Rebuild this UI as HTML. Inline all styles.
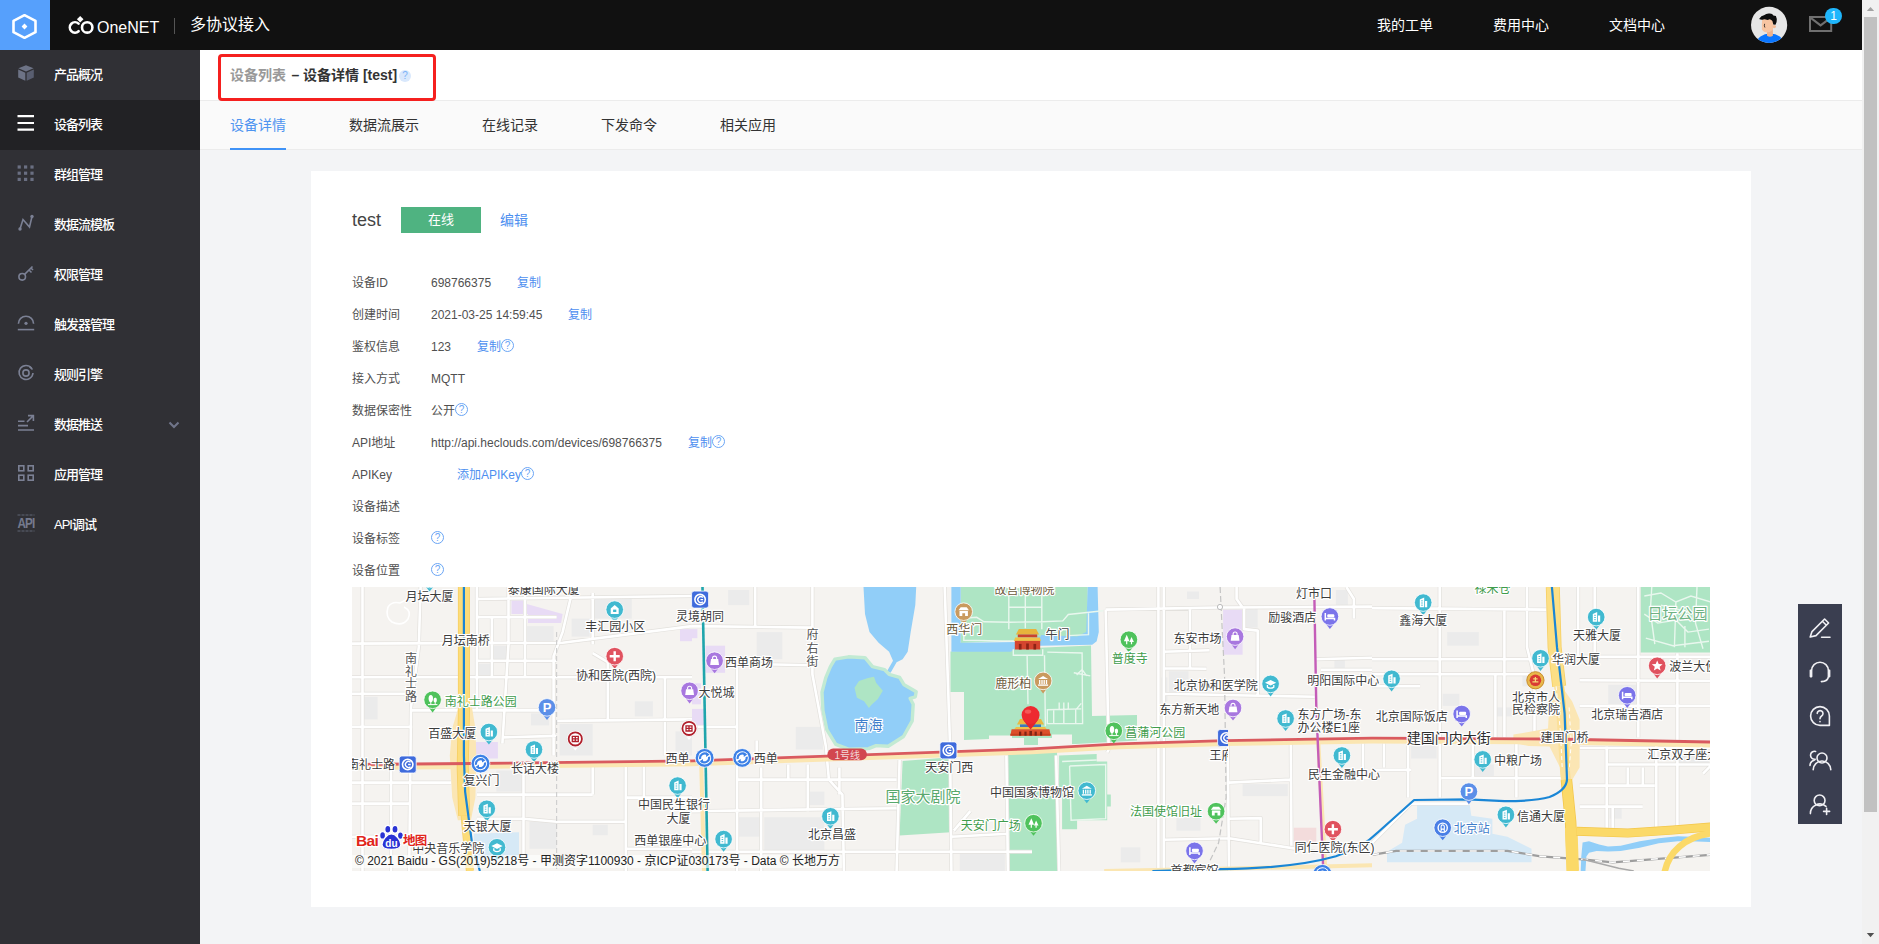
<!DOCTYPE html>
<html lang="zh-CN">
<head>
<meta charset="utf-8">
<title>OneNET 多协议接入 - 设备详情</title>
<style>
*{box-sizing:border-box;margin:0;padding:0}
html,body{width:1879px;height:944px;overflow:hidden;background:#f3f4f6;
  font-family:"Liberation Sans","Noto Sans CJK SC",sans-serif;color:#333;font-size:12px}
.abs{position:absolute}
#top{position:absolute;left:0;top:0;width:1862px;height:50px;background:#111111}
.tn{top:13px;font-size:14px;line-height:24px;color:#fff;white-space:nowrap}
#logo{position:absolute;left:0;top:0;width:50px;height:50px;background:#56a0fc}
#side{position:absolute;left:0;top:50px;width:200px;height:894px;background:#303035}
.mi{position:absolute;left:0;width:200px;height:50px;color:#fff;font-size:13px;font-weight:500;line-height:49px;padding-left:54px;letter-spacing:-1px}
.mi.on{background:#222225}
.mi svg{position:absolute;left:17px;top:14px}
#crumb{position:absolute;left:200px;top:50px;width:1662px;height:51px;z-index:2;background:#fff;border-bottom:1px solid #ececec}
#tabs{position:absolute;left:200px;top:100px;width:1662px;height:50px;background:#fafafa;border-bottom:1px solid #ececec}
.tab{position:absolute;top:0;height:50px;line-height:51px;font-size:14px;color:#333;white-space:nowrap}
.tab.on{color:#4d94f0}
#card{position:absolute;left:311px;top:171px;width:1440px;height:736px;background:#fff}
.lb{position:absolute;left:41px;font-size:12px;color:#505050;white-space:nowrap;line-height:16px}
.vl{position:absolute;left:120px;font-size:12px;color:#505050;white-space:nowrap;line-height:16px}
.lk{position:absolute;font-size:12px;color:#4d8ff0;white-space:nowrap;line-height:16px}
.lb,.vl,.lk{margin-top:1px}
.q{display:inline-block;width:13px;height:13px;border:1px solid #6aa5f5;border-radius:50%;color:#6aa5f5;font-size:10px;line-height:11px;text-align:center;vertical-align:2px;margin-left:0}
#sb{position:absolute;left:1862px;top:0;width:17px;height:944px;background:#f1f1f1}
#sb .th{position:absolute;left:2px;top:17px;width:13px;height:795px;background:#c1c1c1}
#float{position:absolute;left:1798px;top:604px;width:44px;height:220px;background:#3a3e50}
#map{position:absolute;left:41px;top:416px;width:1358px;height:284px;background:#f5f3f0;overflow:hidden}
</style>
</head>
<body>
<div id="top">
  <div id="logo">
    <svg width="50" height="50" viewBox="0 0 50 50" style="position:absolute;left:0;top:0">
      <polygon points="24.5,15.2 35.5,20.8 35.5,32.2 24.5,37.8 13.5,32.2 13.5,20.8" fill="none" stroke="#fff" stroke-width="2.6" stroke-linejoin="round"/>
      <polygon points="24.5,23.6 27.4,26.5 24.5,29.4 21.6,26.5" fill="#fff"/>
    </svg>
  </div>
  <svg class="abs" style="left:66px;top:14px" width="30" height="22" viewBox="0 0 30 22">
    <path d="M12.6 9.6 A5.2 5.2 0 1 0 12.6 17.2" fill="none" stroke="#fff" stroke-width="2.6" stroke-linecap="round"/>
    <circle cx="21.2" cy="13.4" r="5.2" fill="none" stroke="#fff" stroke-width="2.6"/>
    <polygon points="14.2,2 17.5,5.3 14.2,8.6 10.9,5.3" fill="#fff"/>
  </svg>
  <div class="abs" style="left:97px;top:17.5px;font-size:16px;line-height:20px;color:#fff;letter-spacing:0">OneNET</div>
  <div class="abs" style="left:174px;top:18px;width:1px;height:16px;background:#555"></div>
  <div class="abs" style="left:190px;top:13px;font-size:16px;line-height:24px;color:#fff">多协议接入</div>
  <div class="abs tn" style="left:1377px">我的工单</div>
  <div class="abs tn" style="left:1493px">费用中心</div>
  <div class="abs tn" style="left:1609px">文档中心</div>
  <svg class="abs" style="left:1750px;top:6px" width="38" height="38" viewBox="0 0 38 38">
    <defs><clipPath id="avc"><circle cx="19.1" cy="18.9" r="18.1"/></clipPath></defs>
    <circle cx="19.1" cy="18.9" r="18.1" fill="#e6e6e6"/>
    <g clip-path="url(#avc)">
      <ellipse cx="20.1" cy="37.4" rx="13.6" ry="9.8" fill="#0a76ff"/>
      <path d="M17 24.6 L22.9 22.8 V29.8 Q20 31.6 17 29.8 Z" fill="#efb28c"/>
      <path d="M12.2 13.2 L23.6 12.6 L23.3 21 L22.9 23.8 Q20 26.6 17 26.5 Q13.6 26.4 11.9 23.8 Q11.6 18 12.2 13.2 Z" fill="#f7c5a2"/>
      <circle cx="24.3" cy="20.6" r="1.7" fill="#f3bb96"/>
      <path d="M9.1 12.9 Q11 9.6 14.5 9 Q16 7.2 19.6 7.5 Q22.6 7.4 23.4 9.6 L25.9 9.9 Q27.4 13 26.6 16 L25.5 18.8 L23.3 18.6 L22.4 15.1 Q21 13.4 19.4 13.3 Q18 14.2 16.6 13.8 Q15 12.8 13.4 13.4 Q11.4 14.2 9.1 12.9 Z" fill="#0d0d0d"/>
      <path d="M14.5 18.2 Q13.9 20 14.7 21.2" stroke="#1a1a1a" stroke-width="0.8" fill="none" stroke-linecap="round"/>
    </g>
  </svg>
  <svg class="abs" style="left:1808px;top:15px" width="26" height="18" viewBox="0 0 26 18">
    <rect x="2" y="2" width="21.2" height="14" fill="none" stroke="#707070" stroke-width="2"/>
    <path d="M2.4 2.6 L12.6 10.4 L22.8 2.6" fill="none" stroke="#707070" stroke-width="2"/>
  </svg>
  <div class="abs" style="left:1825px;top:7.5px;width:17px;height:16.5px;border-radius:9px;background:#1fb6fc;color:#fff;font-size:12px;line-height:17px;text-align:center">1</div>
</div>
<div id="side">
  <div class="mi" style="top:0"><svg width="18" height="18" viewBox="0 0 18 18"><path d="M9 1.2 L16.6 4.3 L9 7.6 L1.4 4.3 Z" fill="#6d7386"/><path d="M1.2 5.6 L8.3 8.7 V16.8 L1.2 13.6 Z" fill="#6d7386"/><path d="M16.8 5.6 L9.7 8.7 V16.8 L16.8 13.6 Z" fill="#595e70"/></svg>产品概况</div>
  <div class="mi on" style="top:50px"><svg width="18" height="18" viewBox="0 0 18 18"><path d="M0.5 2.2 H17 M0.5 9 H17 M0.5 15.6 H17" stroke="#fff" stroke-width="2.2" fill="none"/></svg>设备列表</div>
  <div class="mi" style="top:100px"><svg width="18" height="18" viewBox="0 0 18 18" fill="#6a6f82"><rect x="0.6" y="1.4" width="3.2" height="3.2"/><rect x="7" y="1.4" width="3.2" height="3.2"/><rect x="13.4" y="1.4" width="3.2" height="3.2"/><rect x="0.6" y="7.6" width="3.2" height="3.2"/><rect x="7" y="7.6" width="3.2" height="3.2"/><rect x="13.4" y="7.6" width="3.2" height="3.2"/><rect x="0.6" y="13.8" width="3.2" height="3.2"/><rect x="7" y="13.8" width="3.2" height="3.2"/><rect x="13.4" y="13.8" width="3.2" height="3.2"/></svg>群组管理</div>
  <div class="mi" style="top:150px"><svg width="18" height="18" viewBox="0 0 18 18"><path d="M3 15 L6 5.5 L12.5 13 L15 2.5" stroke="#7b8094" fill="none" stroke-width="1.6"/><circle cx="3" cy="15" r="1.7" fill="#7b8094"/><circle cx="15" cy="2.5" r="1.7" fill="#7b8094"/></svg>数据流模板</div>
  <div class="mi" style="top:200px"><svg width="18" height="18" viewBox="0 0 18 18"><circle cx="5.2" cy="12.8" r="3.3" stroke="#7b8094" fill="none" stroke-width="1.6" stroke-width="1.8"/><path d="M7.6 10.4 L15.5 2.5 M12 6 L14.5 8.5 M14 4 L16 6" stroke="#7b8094" fill="none" stroke-width="1.6" stroke-width="1.8"/></svg>权限管理</div>
  <div class="mi" style="top:250px"><svg width="18" height="18" viewBox="0 0 18 18"><path d="M1.4 9.8 A7.6 7.6 0 0 1 16.6 9.8" stroke="#7b8094" fill="none" stroke-width="1.6"/><circle cx="9" cy="9.3" r="1.6" fill="#7b8094"/><path d="M0.8 15.6 H17.2" stroke="#7b8094" fill="none" stroke-width="1.6"/></svg>触发器管理</div>
  <div class="mi" style="top:300px"><svg width="18" height="18" viewBox="0 0 18 18"><path d="M14.6 4.2 A7 7 0 1 0 16 9" stroke="#7b8094" fill="none" stroke-width="1.6"/><circle cx="9" cy="9" r="3.1" stroke="#7b8094" fill="none" stroke-width="1.6"/><path d="M12.5 2.5 L15.5 5.5" stroke="#7b8094" fill="none" stroke-width="1.6"/></svg>规则引擎</div>
  <div class="mi" style="top:350px"><svg width="18" height="18" viewBox="0 0 18 18"><path d="M1 7.2 H7.5 M1 11.6 H11 M1 16 H17 M10 8 L16 2 M11 1.6 H16.4 V7" stroke="#7b8094" fill="none" stroke-width="1.6"/></svg>数据推送<svg style="left:168px;top:21px" width="12" height="8" viewBox="0 0 12 8"><path d="M1.5 1.5 L6 6 L10.5 1.5" fill="none" stroke="#70758a" stroke-width="2.1"/></svg></div>
  <div class="mi" style="top:400px"><svg width="18" height="18" viewBox="0 0 18 18"><rect x="1.8" y="1.8" width="5" height="5" stroke="#7b8094" fill="none" stroke-width="1.6"/><rect x="11.2" y="1.8" width="5" height="5" stroke="#7b8094" fill="none" stroke-width="1.6"/><rect x="1.8" y="11.2" width="5" height="5" stroke="#7b8094" fill="none" stroke-width="1.6"/><rect x="11.2" y="11.2" width="5" height="5" stroke="#7b8094" fill="none" stroke-width="1.6"/></svg>应用管理</div>
  <div class="mi" style="top:450px"><svg width="18" height="18" viewBox="0 0 18 18"><path d="M0.5 1 H17.5 M0.5 17 H17.5" stroke="#5f6475" stroke-width="1" stroke-dasharray="3 1" fill="none"/><text x="0.5" y="14.4" font-family="Liberation Sans, sans-serif" font-size="14" font-weight="bold" fill="#757a8d" textLength="17" lengthAdjust="spacingAndGlyphs">API</text></svg>API调试</div>
</div>
<div id="crumb">
  <div class="abs" style="left:30px;top:13px;font-size:14px;line-height:24px;font-weight:bold;color:#333;white-space:nowrap"><span style="color:#999;margin-right:1.5px">设备列表</span> – 设备详情 [test]</div>
  <div class="abs" style="left:199px;top:20px;width:12px;height:12px;border-radius:6px;background:#d9e8fc;color:#7db2f7;font-size:10px;line-height:12px;text-align:center">?</div>
</div>
<div class="abs" style="left:218px;top:54px;width:218px;height:47px;border:3px solid #f5201f;border-radius:4px;z-index:5"></div>
<div id="tabs">
  <div class="tab on" style="left:30px">设备详情</div>
  <div class="abs" style="left:30px;top:48px;width:56px;height:2px;background:#4093f7;z-index:3"></div>
  <div class="tab" style="left:149px">数据流展示</div>
  <div class="tab" style="left:282px">在线记录</div>
  <div class="tab" style="left:401px">下发命令</div>
  <div class="tab" style="left:520px">相关应用</div>
</div>
<div id="card">
<div class="abs" style="left:41px;top:37px;font-size:18px;line-height:24px;color:#444">test</div>
<div class="abs" style="left:90px;top:36px;width:80px;height:26px;background:#4fb381;color:#fff;font-size:13px;line-height:26px;text-align:center">在线</div>
<div class="lk" style="left:189px;top:38px;font-size:14px;line-height:20px">编辑</div>
<div class="lb" style="top:103px">设备ID</div>
<div class="lb" style="top:135px">创建时间</div>
<div class="lb" style="top:167px">鉴权信息</div>
<div class="lb" style="top:199px">接入方式</div>
<div class="lb" style="top:231px">数据保密性</div>
<div class="lb" style="top:263px">API地址</div>
<div class="lb" style="top:295px">APIKey</div>
<div class="lb" style="top:327px">设备描述</div>
<div class="lb" style="top:359px">设备标签</div>
<div class="lb" style="top:391px">设备位置</div>
<div class="vl" style="top:103px">698766375</div>
<div class="lk" style="left:206px;top:103px">复制</div>
<div class="vl" style="top:135px">2021-03-25 14:59:45</div>
<div class="lk" style="left:257px;top:135px">复制</div>
<div class="vl" style="top:167px">123</div>
<div class="lk" style="left:166px;top:167px">复制<span class="q">?</span></div>
<div class="vl" style="top:199px">MQTT</div>
<div class="vl" style="top:231px">公开<span class="q">?</span></div>
<div class="vl" style="top:263px">http://api.heclouds.com/devices/698766375</div>
<div class="lk" style="left:377px;top:263px">复制<span class="q">?</span></div>
<div class="lk" style="left:146px;top:295px">添加APIKey<span class="q">?</span></div>
<div class="lk" style="left:120px;top:359px"><span class="q">?</span></div>
<div class="lk" style="left:120px;top:391px"><span class="q">?</span></div>
  <div id="map">
<svg width="1358" height="284" viewBox="0 0 1358 284" style="position:absolute;left:0;top:0;font-family:'Liberation Sans','Noto Sans CJK SC',sans-serif">
<rect width="1358" height="284" fill="#f5f3f0"/>
<rect x="174.5" y="39.1" width="27.1" height="15.1" fill="#ebebeb" />
<rect x="141.4" y="58.7" width="13.6" height="15.0" fill="#ebebeb" />
<rect x="126.4" y="76.7" width="13.5" height="12.1" fill="#ebebeb" />
<rect x="207.6" y="136.9" width="33.1" height="31.6" fill="#ebebeb" />
<rect x="240.7" y="10.5" width="39.1" height="21.1" fill="#ebebeb" />
<rect x="219.6" y="31.6" width="18.1" height="18.0" fill="#ebebeb" />
<rect x="9.0" y="109.8" width="16.6" height="22.6" fill="#ebebeb" />
<rect x="179.0" y="126.4" width="18.1" height="12.0" fill="#ebebeb" />
<rect x="144.4" y="183.5" width="25.6" height="21.1" fill="#ebebeb" />
<rect x="177.5" y="234.7" width="27.1" height="27.1" fill="#ebebeb" />
<rect x="240.7" y="237.7" width="15.1" height="10.5" fill="#ebebeb" />
<rect x="282.8" y="114.3" width="18.1" height="15.1" fill="#ebebeb" />
<rect x="323.5" y="144.4" width="16.5" height="24.1" fill="#ebebeb" />
<rect x="404.7" y="45.1" width="25.6" height="27.1" fill="#ebebeb" />
<rect x="443.8" y="139.9" width="27.1" height="22.6" fill="#ebebeb" />
<rect x="412.2" y="230.2" width="60.2" height="34.6" fill="#ebebeb" />
<rect x="386.6" y="230.2" width="22.6" height="19.5" fill="#ebebeb" />
<rect x="457.3" y="204.6" width="15.1" height="13.5" fill="#ebebeb" />
<rect x="376.1" y="3.0" width="21.1" height="15.1" fill="#ebebeb" />
<rect x="607.8" y="266.3" width="45.1" height="17.7" fill="#ebebeb" />
<rect x="816.9" y="84.2" width="19.6" height="21.1" fill="#ebebeb" />
<rect x="893.6" y="19.6" width="12.1" height="21.0" fill="#ebebeb" />
<rect x="809.4" y="90.3" width="6.0" height="24.0" fill="#ebebeb" />
<rect x="890.6" y="197.1" width="45.2" height="12.0" fill="#ebebeb" />
<rect x="824.4" y="228.7" width="24.1" height="15.0" fill="#ebebeb" />
<rect x="768.8" y="260.3" width="19.5" height="15.0" fill="#ebebeb" />
<rect x="982.4" y="72.2" width="10.5" height="9.0" fill="#ebebeb" />
<rect x="835.0" y="4.5" width="12.0" height="7.5" fill="#ebebeb" />
<rect x="983.9" y="3.0" width="12.0" height="15.1" fill="#ebebeb" />
<rect x="1095.2" y="45.1" width="31.6" height="13.6" fill="#ebebeb" />
<rect x="1090.7" y="106.8" width="16.6" height="12.1" fill="#ebebeb" />
<rect x="1144.9" y="120.4" width="15.0" height="9.0" fill="#ebebeb" />
<rect x="1059.1" y="158.0" width="25.6" height="13.5" fill="#ebebeb" />
<rect x="1256.2" y="97.8" width="28.6" height="21.1" fill="#ebebeb" />
<rect x="1122.3" y="177.5" width="19.6" height="15.1" fill="#ebebeb" />
<rect x="1326.9" y="168.5" width="30.1" height="9.0" fill="#ebebeb" />
<rect x="1257.7" y="219.6" width="12.0" height="12.1" fill="#ebebeb" />
<rect x="1170.4" y="87.3" width="18.1" height="12.0" fill="#ebebeb" />
<rect x="941.8" y="240.7" width="22.5" height="15.100000000000023" fill="#f3dcdc" />
<path d="M159.5 13.5 L173.0 13.5 L173.0 16.5 L210.6 27.1 L209.1 36.1 L176.0 36.1 L176.0 27.1 L159.5 27.1 Z" fill="#e8dbf5" />
<rect x="123.4" y="155.0" width="22.5" height="16.5" fill="#e8dbf5" />
<rect x="328.0" y="42.1" width="12.0" height="12.1" fill="#e8dbf5" />
<rect x="340.0" y="42.1" width="5.4" height="9.1" fill="#e8dbf5" />
<rect x="353.5" y="58.7" width="19.6" height="27.1" fill="#e8dbf5" />
<rect x="340.0" y="96.3" width="9.0" height="21.0" fill="#e8dbf5" />
<rect x="340.0" y="121.9" width="12.0" height="19.5" fill="#e8dbf5" />
<rect x="871.1" y="22.6" width="19.5" height="45.1" fill="#e8dbf5" />
<path d="M121.9 246.7 L167.0 245.2 L167.0 270.8 L121.9 270.8 Z" fill="#d6e9f6" />
<path d="M1065.1 218.1 L1117.8 218.1 L1119.3 228.7 L1140.4 231.7 L1140.4 246.7 L1155.4 249.7 L1179.5 261.8 L1179.5 275.3 L1035.0 275.3 L1035.0 264.8 L1050.1 255.8 L1053.1 237.7 L1065.1 231.7 Z" fill="#d6e9f6" />
<path d="M598.5 64.5 L739 58.5 L740 129 L785 128 L785 153.5 L724 157 L720 157 L720 147.5 L700 147.5 L700 151 L686 151 L686 158 L672 158 L672 151 L660 151 L660 148.5 L637 148.5 L637 152 L612 153 L612 105 L598.5 105 Z" fill="#aee5c4" />
<path d="M608.7 0 L735.7 0 L735.7 50 L608.7 56 Z" fill="#aee5c4" />
<path d="M550.6 173.9 L598.8 170.3 L598.8 245.2 L547.6 248.5 Z" fill="#aee5c4" />
<path d="M656 163 L705 161 L706 284 L658 284 Z" fill="#aee5c4" />
<path d="M707.1 168.5 L744.7 167.0 L744.7 174.5 L755.2 174.5 L755.2 207.6 L758.8 207.6 L758.8 219.6 L755.2 219.6 L755.2 233.2 L725.1 233.2 L725.1 242.2 L710.1 242.2 L710.1 210.6 L707.1 210.6 Z" fill="#aee5c4" />
<path d="M1288.7 0.0 L1360.0 0.0 L1360.0 65.6 L1288.7 65.6 Z" fill="#aee5c4" />
<path d="M599.4 0.0 L608.7 0.0 L608.7 55.7 L680.0 54.8 L680.0 61.7 L661.9 62.3 L658.9 64.7 L599.4 64.7 Z" fill="#91cef8" />
<path d="M680.0 49.6 L689.0 49.6 L689.0 48.1 L725.1 49.6 L734.2 45.1 L735.7 0.0 L745.6 0.0 L746.8 45.1 L744.7 54.2 L740.2 57.8 L689.0 58.7 L680.0 58.7 Z" fill="#91cef8" />
<path d="M511.5 0.0 L564.2 0.0 L563.3 18.1 L558.7 45.1 L555.7 64.7 L550.6 72.2 L544.6 75.2 L538.6 85.8 L535.0 84.2 L541.0 73.7 L537.1 64.7 L526.6 55.7 L517.5 45.1 L513.0 27.1 Z" fill="#91cef8" />
<path d="M482.9 72.2 L496.5 69.8 L513.0 70.7 L520.5 79.7 L532.6 82.7 L537.1 87.3 L547.6 90.3 L552.1 97.8 L564.2 104.7 L563.3 109.8 L558.1 111.3 L561.2 117.3 L560.2 133.9 L551.5 149.5 L536.2 159.2 L524.1 158.6 L516.6 161.6 L496.5 162.2 L483.8 157.4 L474.8 142.6 L470.9 123.4 L470.0 105.3 L473.9 90.3 L478.4 79.7 Z" fill="#91cef8" stroke="#c2ead3" stroke-width="3.4" stroke-linejoin="round"/>
<path d="M502.5 100.8 L507.0 93.9 L516.0 90.9 L522.0 89.7 L524.1 95.7 L530.8 103.8 L525.9 111.9 L519.3 117.9 L516.9 121.0 L512.1 114.3 L504.9 110.7 Z" fill="#aee5c4" />
<path d="M1230.6 255.6 L1237.0 254.3 L1247.1 257.5 L1256.0 259.4 L1268.7 258.8 L1287.8 254.3 L1306.9 251.2 L1325.9 249.3 L1345.0 249.9 L1359.0 250.8 L1359.0 255.0 L1338.6 254.3 L1325.9 254.3 L1306.9 256.2 L1287.8 260.7 L1268.7 263.9 L1256.0 264.5 L1244.6 263.9 L1237.0 265.8 L1234.4 269.6 L1233.4 284.8 L1228.7 284.8 L1229.3 269.6 L1230.0 262.0 Z" fill="#91cef8" />
<path d="M10.5 0.0 L10.5 284.0 M68.6 0.0 L66.8 60.2 L59.0 120.4 L57.2 284.0 M124.9 0.0 L124.9 120.4 M156.5 0.0 L156.5 57.2 L150.4 156.5 M173.0 0.0 L173.0 90.3 M221.2 0.0 L210.6 45.1 L201.6 69.2 L201.6 168.5 M240.7 6.0 L240.7 57.2 M255.8 90.3 L255.8 132.4 M273.8 177.5 L273.8 284.0 M312.9 90.3 L312.9 168.5 M240.7 177.5 L240.7 207.6 M139.9 30.1 L139.9 90.3 M39.1 177.5 L39.1 284.0 M171.5 180.5 L171.5 270.8 M291.9 177.5 L291.9 210.6 M124.9 12.0 L340.0 9.0 M124.9 30.1 L204.6 30.1 M0.0 56.6 L210.6 55.7 L340.0 39.1 M124.9 73.7 L204.6 73.7 M0.0 90.3 L340.0 90.3 M0.0 106.8 L60.2 106.8 M60.2 123.4 L204.6 123.4 M204.6 133.9 L340.0 132.4 M150.4 150.4 L204.6 148.9 M0.0 139.9 L60.2 139.9 M0.0 195.6 L99.3 195.6 M124.9 207.6 L240.7 207.6 M124.9 231.7 L171.5 231.7 L204.6 234.7 L273.8 234.7 M0.0 216.6 L57.2 216.6 M0.0 249.7 L57.2 249.7 M273.8 210.6 L340.0 210.6 M240.7 177.5 L240.7 180.5 M273.8 261.8 L340.0 261.8 M124.9 90.3 L124.9 123.4 M240.7 66.2 L255.8 75.2 L255.8 90.3 M403.2 0.0 L403.2 39.1 M385.1 78.2 L385.1 284.0 M460.4 0.0 L460.4 87.3 L473.9 159.5 L476.9 192.6 L490.4 207.6 L491.9 284.0 M592.7 0.0 L598.2 162.5 M598.2 171.5 L599.4 284.0 M547.6 173.0 L544.6 284.0 M654.4 168.5 L655.9 284.0 M340.0 39.1 L460.4 40.6 M385.1 76.7 L460.4 78.2 M340.0 139.9 L385.1 139.9 M385.1 192.6 L544.6 192.6 M340.0 224.2 L544.6 221.2 M340.0 264.8 L680.0 264.8 M409.2 180.5 L409.2 284.0 M436.3 177.5 L436.3 192.6 M455.8 177.5 L455.8 224.2 M487.4 180.5 L487.4 207.6 M404.7 153.5 L404.7 168.5 M599.4 249.7 L655.9 246.7 M601.8 243.7 L618.3 224.2 M753.7 22.6 L756.7 162.5 M806.4 0.0 L806.4 284.0 M811.8 0.0 L811.8 284.0 M875.6 156.5 L877.1 284.0 M938.8 156.5 L939.4 258.8 M753.7 22.6 L866.6 20.5 L1020.0 19.6 M811.8 64.7 L857.5 63.2 M811.8 81.2 L854.5 81.8 M811.8 106.8 L962.8 109.8 M962.8 72.2 L1020.0 70.7 M877.1 195.6 L938.8 192.6 M877.1 231.7 L908.7 231.1 L908.7 255.8 M811.8 252.7 L877.1 251.2 L962.8 264.8 M968.9 191.1 L1020.0 191.1 M838.0 21.1 L838.0 81.2 M892.1 21.1 L892.1 42.1 L905.7 43.6 L905.7 108.3 M884.6 0.0 L884.6 12.0 L890.6 20.5 M994.4 0.0 L1001.9 12.0 L1001.9 31.6 M756.7 162.5 L755.2 165.5 M704.1 168.5 L707.1 284.0 M968.9 82.7 L1020.0 82.7 M1011.0 156.5 L1011.0 192.6 M1087.7 0.0 L1087.7 210.6 M1152.4 22.6 L1152.4 150.4 M1143.4 87.3 L1143.4 150.4 M1175.0 0.0 L1175.0 60.2 L1182.5 90.3 L1182.5 150.4 M1226.1 0.0 L1226.1 69.2 M1286.3 0.0 L1286.3 150.4 M1325.4 66.2 L1325.4 240.7 M1254.7 159.5 L1254.7 240.7 M1304.3 156.5 L1304.3 240.7 M1056.1 156.5 L1056.1 210.6 M1032.0 156.5 L1032.0 180.5 M1020.0 21.1 L1194.5 22.6 M1020.0 72.2 L1188.5 72.2 M1224.6 69.8 L1360.0 69.8 M1020.0 87.3 L1188.5 87.3 M1227.6 93.3 L1360.0 93.9 M1227.6 118.9 L1360.0 118.9 M1020.0 182.9 L1059.1 182.9 M1089.2 191.1 L1212.6 191.1 M1227.6 161.0 L1360.0 161.0 M1254.7 177.5 L1360.0 177.5 M1227.6 198.6 L1302.8 198.6 M1227.6 219.6 L1290.8 219.6 M1120.8 156.5 L1120.8 192.6 M1164.4 156.5 L1164.4 210.6 M1242.7 0.0 L1242.7 69.2 M1020.0 99.3 L1068.1 99.3 M1275.8 180.5 L1275.8 198.6 M1290.8 180.5 L1290.8 198.6 M1360.0 177.5 L1351.0 186.6 M1260.7 219.6 L1260.7 240.7 M1020.0 255.8 L1059.1 216.6 L1116.3 216.6 M1286.3 69.8 L1286.3 118.9" fill="none" stroke="#e3e1dd" stroke-width="4" stroke-linejoin="round"/>
<path d="M10.5 0.0 L10.5 284.0 M68.6 0.0 L66.8 60.2 L59.0 120.4 L57.2 284.0 M124.9 0.0 L124.9 120.4 M156.5 0.0 L156.5 57.2 L150.4 156.5 M173.0 0.0 L173.0 90.3 M221.2 0.0 L210.6 45.1 L201.6 69.2 L201.6 168.5 M240.7 6.0 L240.7 57.2 M255.8 90.3 L255.8 132.4 M273.8 177.5 L273.8 284.0 M312.9 90.3 L312.9 168.5 M240.7 177.5 L240.7 207.6 M139.9 30.1 L139.9 90.3 M39.1 177.5 L39.1 284.0 M171.5 180.5 L171.5 270.8 M291.9 177.5 L291.9 210.6 M124.9 12.0 L340.0 9.0 M124.9 30.1 L204.6 30.1 M0.0 56.6 L210.6 55.7 L340.0 39.1 M124.9 73.7 L204.6 73.7 M0.0 90.3 L340.0 90.3 M0.0 106.8 L60.2 106.8 M60.2 123.4 L204.6 123.4 M204.6 133.9 L340.0 132.4 M150.4 150.4 L204.6 148.9 M0.0 139.9 L60.2 139.9 M0.0 195.6 L99.3 195.6 M124.9 207.6 L240.7 207.6 M124.9 231.7 L171.5 231.7 L204.6 234.7 L273.8 234.7 M0.0 216.6 L57.2 216.6 M0.0 249.7 L57.2 249.7 M273.8 210.6 L340.0 210.6 M240.7 177.5 L240.7 180.5 M273.8 261.8 L340.0 261.8 M124.9 90.3 L124.9 123.4 M240.7 66.2 L255.8 75.2 L255.8 90.3 M403.2 0.0 L403.2 39.1 M385.1 78.2 L385.1 284.0 M460.4 0.0 L460.4 87.3 L473.9 159.5 L476.9 192.6 L490.4 207.6 L491.9 284.0 M592.7 0.0 L598.2 162.5 M598.2 171.5 L599.4 284.0 M547.6 173.0 L544.6 284.0 M654.4 168.5 L655.9 284.0 M340.0 39.1 L460.4 40.6 M385.1 76.7 L460.4 78.2 M340.0 139.9 L385.1 139.9 M385.1 192.6 L544.6 192.6 M340.0 224.2 L544.6 221.2 M340.0 264.8 L680.0 264.8 M409.2 180.5 L409.2 284.0 M436.3 177.5 L436.3 192.6 M455.8 177.5 L455.8 224.2 M487.4 180.5 L487.4 207.6 M404.7 153.5 L404.7 168.5 M599.4 249.7 L655.9 246.7 M601.8 243.7 L618.3 224.2 M753.7 22.6 L756.7 162.5 M806.4 0.0 L806.4 284.0 M811.8 0.0 L811.8 284.0 M875.6 156.5 L877.1 284.0 M938.8 156.5 L939.4 258.8 M753.7 22.6 L866.6 20.5 L1020.0 19.6 M811.8 64.7 L857.5 63.2 M811.8 81.2 L854.5 81.8 M811.8 106.8 L962.8 109.8 M962.8 72.2 L1020.0 70.7 M877.1 195.6 L938.8 192.6 M877.1 231.7 L908.7 231.1 L908.7 255.8 M811.8 252.7 L877.1 251.2 L962.8 264.8 M968.9 191.1 L1020.0 191.1 M838.0 21.1 L838.0 81.2 M892.1 21.1 L892.1 42.1 L905.7 43.6 L905.7 108.3 M884.6 0.0 L884.6 12.0 L890.6 20.5 M994.4 0.0 L1001.9 12.0 L1001.9 31.6 M756.7 162.5 L755.2 165.5 M704.1 168.5 L707.1 284.0 M968.9 82.7 L1020.0 82.7 M1011.0 156.5 L1011.0 192.6 M1087.7 0.0 L1087.7 210.6 M1152.4 22.6 L1152.4 150.4 M1143.4 87.3 L1143.4 150.4 M1175.0 0.0 L1175.0 60.2 L1182.5 90.3 L1182.5 150.4 M1226.1 0.0 L1226.1 69.2 M1286.3 0.0 L1286.3 150.4 M1325.4 66.2 L1325.4 240.7 M1254.7 159.5 L1254.7 240.7 M1304.3 156.5 L1304.3 240.7 M1056.1 156.5 L1056.1 210.6 M1032.0 156.5 L1032.0 180.5 M1020.0 21.1 L1194.5 22.6 M1020.0 72.2 L1188.5 72.2 M1224.6 69.8 L1360.0 69.8 M1020.0 87.3 L1188.5 87.3 M1227.6 93.3 L1360.0 93.9 M1227.6 118.9 L1360.0 118.9 M1020.0 182.9 L1059.1 182.9 M1089.2 191.1 L1212.6 191.1 M1227.6 161.0 L1360.0 161.0 M1254.7 177.5 L1360.0 177.5 M1227.6 198.6 L1302.8 198.6 M1227.6 219.6 L1290.8 219.6 M1120.8 156.5 L1120.8 192.6 M1164.4 156.5 L1164.4 210.6 M1242.7 0.0 L1242.7 69.2 M1020.0 99.3 L1068.1 99.3 M1275.8 180.5 L1275.8 198.6 M1290.8 180.5 L1290.8 198.6 M1360.0 177.5 L1351.0 186.6 M1260.7 219.6 L1260.7 240.7 M1020.0 255.8 L1059.1 216.6 L1116.3 216.6 M1286.3 69.8 L1286.3 118.9" fill="none" stroke="#ffffff" stroke-width="2.6" stroke-linejoin="round"/>
<path d="M656.8 3.7 L656.8 42.2 M689.8 3.7 L689.8 42.2 M656.8 20.2 L689.8 20.2 M673.3 7.3 L673.3 41.3 M656.8 5.5 L689.8 5.5 M611.8 31.2 L624.7 30.3 L632.0 34.8 L657.7 35.2 L690.7 34.8 L710.8 33.9 L716.3 27.5 L751.2 23.8 M611.8 33.0 L611.8 53.2 L661.3 54.1 M736.5 24.8 L736.5 47.7 L716.3 48.6 M661.3 62.3 L661.3 68.2 L690.7 68.2 L690.7 62.3 M675.1 68.2 L676.0 117.3 M692.5 68.2 L693.4 139.3 M695.3 65.1 L730.1 66.0 L730.6 136.6 L695.3 136.6 L695.3 122.8 L729.2 121.9 M701.7 122.8 L701.7 136.6 M711.8 115.5 L711.8 136.6 M716.3 115.5 L716.3 121.9 M707.2 115.5 L707.2 121.9 M723.7 122.8 L723.7 136.6 M721.8 85.8 L738.3 88.9 M724.6 88.0 L730.1 82.5 L734.7 88.9 M724.6 121.9 L729.2 116.4 M717.6 179.0 L753.7 177.5 L753.7 231.7 L719.1 233.2 L717.6 179.0 M710.1 174.5 L744.7 173.0 M1292.3 9.0 L1308.9 6.0 L1323.9 15.0 L1338.9 9.0 L1358.5 15.0 M1292.3 27.1 L1305.8 36.1 L1323.9 33.1 L1335.9 45.1 L1357.0 42.1 M1299.8 0.0 L1298.3 24.1 L1302.8 57.2 M1323.9 15.0 L1322.4 60.2 M1345.0 0.0 L1343.5 36.1 L1351.0 61.7 M1293.8 51.2 L1320.9 58.7 L1357.0 54.2 M1308.9 18.1 L1332.9 24.1 L1354.0 30.1 M1332.9 39.1 L1332.9 60.2" fill="none" stroke="#e9f7ee" stroke-width="1.4"/>
<path d="M36 20 Q40 14 48 16 L56 12 M36 20 Q33 30 40 35 Q50 40 56 32 Q60 24 52 20" fill="none" stroke="#fff" stroke-width="1.6"/>
<path d="M204.6 45.1 L204.6 284.0" fill="none" stroke="#cfcfcf" stroke-width="1.2" stroke-dasharray="5 3"/>
<path d="M868.1 0.0 L872.6 90.3 L874.1 210.6 L866.6 255.8 L853.0 284.0" fill="none" stroke="#c4c4c4" stroke-width="1.2" stroke-dasharray="6 3"/>
<circle cx="868" cy="20" r="2.6" fill="#fff" stroke="#bbb" stroke-width="1"/>
<path d="M1020.0 267.8 L1044.1 263.9 L1155.4 263.9 L1188.5 269.3 L1230.6 272.3 L1260.7 275.3 L1358.5 267.8" fill="none" stroke="#9e9e9e" stroke-width="2.2"/>
<path d="M1020.0 267.8 L1044.1 263.9 L1155.4 263.9 L1188.5 269.3 L1230.6 272.3 L1260.7 275.3 L1358.5 267.8" fill="none" stroke="#fff" stroke-width="1.5" stroke-dasharray="7 7"/>
<path d="M1230.6 272.3 L1266.7 281.3 L1281.8 284.0" fill="none" stroke="#a9a9a9" stroke-width="1.4"/>
<path d="M0 180.1 L120 179.1 L340 176.4 L475 171.79999999999998 L680 164.4 L767 159.4 L873 156.2 L1020 153.79999999999998 L1200 154.6 L1358 157.6" fill="none" stroke="#fbe6b2" stroke-width="5.6"/>
<path d="M349.0 168.5 L352.0 284.0" fill="none" stroke="#fbe6b2" stroke-width="4"/>
<path d="M966.4 156.5 L973.4 284.0" fill="none" stroke="#fbe6b2" stroke-width="4"/>
<path d="M752.2 284.0 L890.6 281.3 L1020.0 278.3" fill="none" stroke="#fbe6b2" stroke-width="4"/>
<path d="M106.8 118.9 L119.8 118.9 L123.4 141.4 L124.3 168.5 L123.4 210.6 L118.9 233.2 L105.9 233.2 L100.2 210.6 L97.8 168.5 L100.2 141.4 Z" fill="#fbe6b4" />
<path d="M112.2 222.7 L113.7 240.7 L117.9 284.0" fill="none" stroke="#f6cf63" stroke-width="8"/>
<path d="M112.2 222.7 L113.7 240.7 L117.9 284.0" fill="none" stroke="#fcdc7a" stroke-width="6.6"/>
<path d="M111.9 0.0 L111.9 126.4 L110.7 180.5 L112.2 228.7" fill="none" stroke="#f6cf63" stroke-width="12"/>
<path d="M111.9 0.0 L111.9 126.4 L110.7 180.5 L112.2 228.7" fill="none" stroke="#fcdc7a" stroke-width="10.4"/>
<path d="M1161.4 147.4 L1176.5 145.0 L1196.0 141.4 L1197.5 114.3 L1209.6 99.3 L1220.1 114.3 L1227.6 132.4 L1227.6 150.4 L1236.6 151.9 L1236.6 157.1 L1227.6 158.0 L1227.6 180.5 L1218.6 195.6 L1208.1 180.5 L1197.5 159.5 L1176.5 158.9 L1161.4 155.9 Z" fill="#fbe6b4" />
<path d="M1200.8 0.0 L1202.6 60.2 L1207.2 99.3" fill="none" stroke="#f6cf63" stroke-width="14"/>
<path d="M1200.8 0.0 L1202.6 60.2 L1207.2 99.3" fill="none" stroke="#fcdf85" stroke-width="12.4"/>
<path d="M1207.2 99.3 L1209.0 120.4 L1213.2 186.6 L1215.0 198.6" fill="none" stroke="#fbe09a" stroke-width="10"/>
<path d="M1210.8 99.3 L1212.6 120.4 L1216.2 180.5" fill="none" stroke="#fbd766" stroke-width="2.4"/>
<path d="M1214.4 192.6 L1218.6 234.7 L1220.7 284.0" fill="none" stroke="#f3c64a" stroke-width="11.5"/>
<path d="M1214.4 192.6 L1218.6 234.7 L1220.7 284.0" fill="none" stroke="#fbd968" stroke-width="10"/>
<path d="M1219.2 240.7 L1220.7 284.0" fill="none" stroke="#fbd968" stroke-width="12.5"/>
<path d="M1224.6 244.3 L1275.8 246.1 L1320.9 243.1 L1360.0 239.8" fill="none" stroke="#f3c64a" stroke-width="9"/>
<path d="M1224.6 244.3 L1275.8 246.1 L1320.9 243.1 L1360.0 239.8" fill="none" stroke="#fbd968" stroke-width="7.6"/>
<path d="M1360.0 246.1 C1332.9 249.7 1316.4 264.8 1312.5 285.8" fill="none" stroke="#fbd968" stroke-width="6.5"/>
<path d="M1204.1 99.3 L1208.4 144.4 L1210.2 180.5 M1217.1 120.4 L1219.2 156.5 L1217.1 183.5" fill="none" stroke="#fff" stroke-width="1" stroke-dasharray="4 3"/>
<path d="M0 177.5 L120 176.5 L340 173.8 L475 169.2 L680 161.8 L767 156.8 L873 153.6 L1020 151.2 L1200 152 L1358 155" fill="none" stroke="#d95a5f" stroke-width="2.8"/>
<path d="M111.9 0.0 L111.9 168.5 L113.1 204.6 L120.4 258.8 L127.9 284.0" fill="none" stroke="#1a86d6" stroke-width="2.2" stroke-linejoin="round"/>
<path d="M350.5 0.0 L355.6 284.0" fill="none" stroke="#1fa5ac" stroke-width="2.6"/>
<path d="M962.2 0.0 L964.3 120.4 L971.3 284.0" fill="none" stroke="#c45cb8" stroke-width="2.4"/>
<path d="M1199.9 0.0 L1205.0 60.2 L1212.6 126.4 L1215.0 192.6 Q1214.4 203.1 1197.5 210.0 Q1182.5 214.2 1152.4 214.2 L1116.3 212.4 L1062.1 213.0 L1026.0 245.2 Q1011.0 260.3 983.9 269.3 Q941.8 281.3 869.6 282.2 L800.4 284.0" fill="none" stroke="#1a86d6" stroke-width="2.2" stroke-linejoin="round"/>
<text x="77.6" y="14.2" font-size="12" text-anchor="middle" fill="#3c3c3c" font-weight="normal" stroke="#fff" stroke-width="2.4" stroke-linejoin="round" paint-order="stroke" >月坛大厦</text>
<g transform="translate(77.6 -8)"><path d="M-4.2 7.2 L0 12.6 L4.2 7.2 Z" fill="#41b9d0"/><circle r="8.8" fill="#41b9d0" stroke="#fff" stroke-width="0.8"/><path d="M-3.4 4.6 V-3.2 L1 -5 V4.6 Z M1.8 4.6 V-1.6 H4 V4.6 Z" fill="#fff"/><path d="M-2 -1.8 h1.6 M-2 0.4 h1.6 M-2 2.6 h1.6" stroke="#41b9d0" stroke-width="0.9"/></g>
<text x="191.7" y="7.3" font-size="12" text-anchor="middle" fill="#3c3c3c" font-weight="normal" stroke="#fff" stroke-width="2.4" stroke-linejoin="round" paint-order="stroke" >泰康国际大厦</text>
<text x="113.7" y="57.6" font-size="12" text-anchor="middle" fill="#3c3c3c" font-weight="normal" stroke="#fff" stroke-width="2.4" stroke-linejoin="round" paint-order="stroke" >月坛南桥</text>
<g transform="translate(262.7 22.6)"><path d="M-4.2 7.2 L0 12.6 L4.2 7.2 Z" fill="#41b9d0"/><circle r="8.8" fill="#41b9d0" stroke="#fff" stroke-width="0.8"/><path d="M-4 4.4 V-1 L0 -4.6 L4 -1 V4.4 Z" fill="#fff"/><rect x="-1.6" y="0" width="3.2" height="2.4" fill="#41b9d0"/></g>
<text x="263.3" y="44.3" font-size="12" text-anchor="middle" fill="#3c3c3c" font-weight="normal" stroke="#fff" stroke-width="2.4" stroke-linejoin="round" paint-order="stroke" >丰汇园小区</text>
<g transform="translate(262.7 69.2)"><path d="M-4.2 7.2 L0 12.6 L4.2 7.2 Z" fill="#e0525f"/><circle r="8.8" fill="#e0525f" stroke="#fff" stroke-width="0.8"/><path d="M-5 0 H5 M0 -5 V5" stroke="#fff" stroke-width="2.4"/></g>
<text x="263.9" y="92.5" font-size="12" text-anchor="middle" fill="#3c3c3c" font-weight="normal" stroke="#fff" stroke-width="2.4" stroke-linejoin="round" paint-order="stroke" >协和医院(西院)</text>
<text x="59.0" y="75.6" font-size="12" text-anchor="middle" fill="#555" font-weight="normal" stroke="#fff" stroke-width="2.4" stroke-linejoin="round" paint-order="stroke" >南</text>
<text x="59.0" y="88.5" font-size="12" text-anchor="middle" fill="#555" font-weight="normal" stroke="#fff" stroke-width="2.4" stroke-linejoin="round" paint-order="stroke" >礼</text>
<text x="59.0" y="101.3" font-size="12" text-anchor="middle" fill="#555" font-weight="normal" stroke="#fff" stroke-width="2.4" stroke-linejoin="round" paint-order="stroke" >士</text>
<text x="59.0" y="114.2" font-size="12" text-anchor="middle" fill="#555" font-weight="normal" stroke="#fff" stroke-width="2.4" stroke-linejoin="round" paint-order="stroke" >路</text>
<g transform="translate(80.6 112.8)"><path d="M-4.2 7.2 L0 12.6 L4.2 7.2 Z" fill="#4fc25c"/><circle r="8.8" fill="#4fc25c" stroke="#fff" stroke-width="0.8"/><ellipse cx="-1.8" cy="-1.2" rx="2.2" ry="3.6" fill="#fff"/><ellipse cx="2.6" cy="0.2" rx="1.7" ry="2.6" fill="#fff"/><path d="M-1.8 1 V4.8 M2.6 1.6 V4.8 M-4.6 4.8 H4.8" stroke="#fff" stroke-width="1"/></g>
<text x="92.7" y="118.6" font-size="12" text-anchor="start" fill="#3f9c4c" font-weight="normal" stroke="#fff" stroke-width="2.4" stroke-linejoin="round" paint-order="stroke" >南礼士路公园</text>
<g transform="translate(195.0 120.4)"><path d="M-4.2 7.2 L0 12.6 L4.2 7.2 Z" fill="#5b8fe8"/><circle r="8.8" fill="#5b8fe8" stroke="#fff" stroke-width="0.8"/><text x="0" y="4.6" font-size="13" font-weight="bold" text-anchor="middle" fill="#fff">P</text></g>
<text x="124.3" y="151.1" font-size="12" text-anchor="end" fill="#3c3c3c" font-weight="normal" stroke="#fff" stroke-width="2.4" stroke-linejoin="round" paint-order="stroke" >百盛大厦</text>
<g transform="translate(136.9 145.0)"><path d="M-4.2 7.2 L0 12.6 L4.2 7.2 Z" fill="#41b9d0"/><circle r="8.8" fill="#41b9d0" stroke="#fff" stroke-width="0.8"/><path d="M-3.4 4.6 V-3.2 L1 -5 V4.6 Z M1.8 4.6 V-1.6 H4 V4.6 Z" fill="#fff"/><path d="M-2 -1.8 h1.6 M-2 0.4 h1.6 M-2 2.6 h1.6" stroke="#41b9d0" stroke-width="0.9"/></g>
<g transform="translate(182.0 162.5)"><path d="M-4.2 7.2 L0 12.6 L4.2 7.2 Z" fill="#41b9d0"/><circle r="8.8" fill="#41b9d0" stroke="#fff" stroke-width="0.8"/><path d="M-3.4 4.6 V-3.2 L1 -5 V4.6 Z M1.8 4.6 V-1.6 H4 V4.6 Z" fill="#fff"/><path d="M-2 -1.8 h1.6 M-2 0.4 h1.6 M-2 2.6 h1.6" stroke="#41b9d0" stroke-width="0.9"/></g>
<text x="182.9" y="186.3" font-size="12" text-anchor="middle" fill="#3c3c3c" font-weight="normal" stroke="#fff" stroke-width="2.4" stroke-linejoin="round" paint-order="stroke" >长话大楼</text>
<g transform="translate(223.3 151.9)"><path d="M-3.6 7.4 L0 11.6 L3.6 7.4 Z" fill="#fff"/><circle r="8.6" fill="#fff" stroke="#e2e2e2" stroke-width="0.6"/><circle r="6.6" fill="none" stroke="#b0202c" stroke-width="1.8"/><path d="M-3 -2.6 H3 V2.6 H-3 Z M-3 0 H3 M0 -2.6 V2.6" fill="none" stroke="#b0202c" stroke-width="1.3"/></g>
<text x="43.0" y="182.4" font-size="12" text-anchor="end" fill="#3c3c3c" font-weight="normal" stroke="#fff" stroke-width="2.4" stroke-linejoin="round" paint-order="stroke" >南礼士路</text>
<g transform="translate(55.7 177.5)"><rect x="-8.5" y="-8.5" width="17" height="17" rx="2.6" fill="#3f6bdc" stroke="#fff" stroke-width="0.8"/><circle r="5.2" fill="none" stroke="#fff" stroke-width="1.6"/><path d="M2.8 -2.2 A3 3 0 1 0 2.8 2.2 M0.4 0 H3" fill="none" stroke="#fff" stroke-width="1.4"/></g>
<g transform="translate(128.5 176.6)"><circle r="9.4" fill="#3c80e6" stroke="#fff" stroke-width="0.8"/><circle r="6.6" fill="#fff"/><path d="M-4.4 1.2 A4.6 4.6 0 0 1 3 -3.4 M4.4 -1.2 A4.6 4.6 0 0 1 -3 3.4" fill="none" stroke="#3c80e6" stroke-width="2.2"/><path d="M1.4 -5.6 L5 -3.4 L1.6 -1 Z M-1.4 5.6 L-5 3.4 L-1.6 1 Z" fill="#3c80e6"/></g>
<text x="129.4" y="197.8" font-size="12" text-anchor="middle" fill="#3c3c3c" font-weight="normal" stroke="#fff" stroke-width="2.4" stroke-linejoin="round" paint-order="stroke" >复兴门</text>
<g transform="translate(134.8 221.8)"><path d="M-4.2 7.2 L0 12.6 L4.2 7.2 Z" fill="#41b9d0"/><circle r="8.8" fill="#41b9d0" stroke="#fff" stroke-width="0.8"/><path d="M-3.4 4.6 V-3.2 L1 -5 V4.6 Z M1.8 4.6 V-1.6 H4 V4.6 Z" fill="#fff"/><path d="M-2 -1.8 h1.6 M-2 0.4 h1.6 M-2 2.6 h1.6" stroke="#41b9d0" stroke-width="0.9"/></g>
<text x="135.4" y="244.1" font-size="12" text-anchor="middle" fill="#3c3c3c" font-weight="normal" stroke="#fff" stroke-width="2.4" stroke-linejoin="round" paint-order="stroke" >天银大厦</text>
<text x="96.3" y="265.5" font-size="12" text-anchor="middle" fill="#3c3c3c" font-weight="normal" stroke="#fff" stroke-width="2.4" stroke-linejoin="round" paint-order="stroke" >中央音乐学院</text>
<g transform="translate(145.0 260.3)"><path d="M-4.2 7.2 L0 12.6 L4.2 7.2 Z" fill="#41b9d0"/><circle r="8.8" fill="#41b9d0" stroke="#fff" stroke-width="0.8"/><path d="M-5.6 -1.2 L0 -4 L5.6 -1.2 L0 1.6 Z" fill="#fff"/><path d="M-3.2 1 V3.2 Q0 5.4 3.2 3.2 V1" fill="none" stroke="#fff" stroke-width="1.3"/></g>
<g transform="translate(325.6 198.6)"><path d="M-4.2 7.2 L0 12.6 L4.2 7.2 Z" fill="#41b9d0"/><circle r="8.8" fill="#41b9d0" stroke="#fff" stroke-width="0.8"/><path d="M-3.4 4.6 V-3.2 L1 -5 V4.6 Z M1.8 4.6 V-1.6 H4 V4.6 Z" fill="#fff"/><path d="M-2 -1.8 h1.6 M-2 0.4 h1.6 M-2 2.6 h1.6" stroke="#41b9d0" stroke-width="0.9"/></g>
<text x="321.9" y="222.4" font-size="12" text-anchor="middle" fill="#3c3c3c" font-weight="normal" stroke="#fff" stroke-width="2.4" stroke-linejoin="round" paint-order="stroke" >中国民生银行</text>
<text x="326.5" y="236.0" font-size="12" text-anchor="middle" fill="#3c3c3c" font-weight="normal" stroke="#fff" stroke-width="2.4" stroke-linejoin="round" paint-order="stroke" >大厦</text>
<text x="318.3" y="257.6" font-size="12" text-anchor="middle" fill="#3c3c3c" font-weight="normal" stroke="#fff" stroke-width="2.4" stroke-linejoin="round" paint-order="stroke" >西单银座中心</text>
<g transform="translate(371.6 252.1)"><path d="M-4.2 7.2 L0 12.6 L4.2 7.2 Z" fill="#41b9d0"/><circle r="8.8" fill="#41b9d0" stroke="#fff" stroke-width="0.8"/><path d="M-3.4 4.6 V-3.2 L1 -5 V4.6 Z M1.8 4.6 V-1.6 H4 V4.6 Z" fill="#fff"/><path d="M-2 -1.8 h1.6 M-2 0.4 h1.6 M-2 2.6 h1.6" stroke="#41b9d0" stroke-width="0.9"/></g>
<g transform="translate(348.1 12.6)"><rect x="-8.5" y="-8.5" width="17" height="17" rx="2.6" fill="#3f6bdc" stroke="#fff" stroke-width="0.8"/><circle r="5.2" fill="none" stroke="#fff" stroke-width="1.6"/><path d="M2.8 -2.2 A3 3 0 1 0 2.8 2.2 M0.4 0 H3" fill="none" stroke="#fff" stroke-width="1.4"/></g>
<text x="348.1" y="33.8" font-size="12" text-anchor="middle" fill="#3c3c3c" font-weight="normal" stroke="#fff" stroke-width="2.4" stroke-linejoin="round" paint-order="stroke" >灵境胡同</text>
<g transform="translate(362.6 73.7)"><path d="M-4.2 7.2 L0 12.6 L4.2 7.2 Z" fill="#a877df"/><circle r="8.8" fill="#a877df" stroke="#fff" stroke-width="0.8"/><path d="M-4.4 4.2 L-3.6 -1.6 H3.6 L4.4 4.2 Z" fill="#fff"/><path d="M-2 -1.4 V-2.6 A2 2 0 0 1 2 -2.6 V-1.4" fill="none" stroke="#fff" stroke-width="1.1"/></g>
<text x="373.1" y="80.4" font-size="12" text-anchor="start" fill="#3c3c3c" font-weight="normal" stroke="#fff" stroke-width="2.4" stroke-linejoin="round" paint-order="stroke" >西单商场</text>
<g transform="translate(337.6 103.8)"><path d="M-4.2 7.2 L0 12.6 L4.2 7.2 Z" fill="#a877df"/><circle r="8.8" fill="#a877df" stroke="#fff" stroke-width="0.8"/><path d="M-4.4 4.2 L-3.6 -1.6 H3.6 L4.4 4.2 Z" fill="#fff"/><path d="M-2 -1.4 V-2.6 A2 2 0 0 1 2 -2.6 V-1.4" fill="none" stroke="#fff" stroke-width="1.1"/></g>
<text x="346.6" y="110.2" font-size="12" text-anchor="start" fill="#3c3c3c" font-weight="normal" stroke="#fff" stroke-width="2.4" stroke-linejoin="round" paint-order="stroke" >大悦城</text>
<g transform="translate(337.0 141.4)"><path d="M-3.6 7.4 L0 11.6 L3.6 7.4 Z" fill="#fff"/><circle r="8.6" fill="#fff" stroke="#e2e2e2" stroke-width="0.6"/><circle r="6.6" fill="none" stroke="#b0202c" stroke-width="1.8"/><path d="M-3 -2.6 H3 V2.6 H-3 Z M-3 0 H3 M0 -2.6 V2.6" fill="none" stroke="#b0202c" stroke-width="1.3"/></g>
<g transform="translate(352.6 170.9)"><circle r="9.4" fill="#3c80e6" stroke="#fff" stroke-width="0.8"/><circle r="6.6" fill="#fff"/><path d="M-4.4 1.2 A4.6 4.6 0 0 1 3 -3.4 M4.4 -1.2 A4.6 4.6 0 0 1 -3 3.4" fill="none" stroke="#3c80e6" stroke-width="2.2"/><path d="M1.4 -5.6 L5 -3.4 L1.6 -1 Z M-1.4 5.6 L-5 3.4 L-1.6 1 Z" fill="#3c80e6"/></g>
<g transform="translate(390.2 170.9)"><circle r="9.4" fill="#3c80e6" stroke="#fff" stroke-width="0.8"/><circle r="6.6" fill="#fff"/><path d="M-4.4 1.2 A4.6 4.6 0 0 1 3 -3.4 M4.4 -1.2 A4.6 4.6 0 0 1 -3 3.4" fill="none" stroke="#3c80e6" stroke-width="2.2"/><path d="M1.4 -5.6 L5 -3.4 L1.6 -1 Z M-1.4 5.6 L-5 3.4 L-1.6 1 Z" fill="#3c80e6"/></g>
<text x="337.6" y="175.8" font-size="12" text-anchor="end" fill="#3c3c3c" font-weight="normal" stroke="#fff" stroke-width="2.4" stroke-linejoin="round" paint-order="stroke" >西单</text>
<text x="401.7" y="175.8" font-size="12" text-anchor="start" fill="#3c3c3c" font-weight="normal" stroke="#fff" stroke-width="2.4" stroke-linejoin="round" paint-order="stroke" >西单</text>
<text x="460.4" y="52.4" font-size="12" text-anchor="middle" fill="#555" font-weight="normal" stroke="#fff" stroke-width="2.4" stroke-linejoin="round" paint-order="stroke" >府</text>
<text x="460.4" y="65.7" font-size="12" text-anchor="middle" fill="#555" font-weight="normal" stroke="#fff" stroke-width="2.4" stroke-linejoin="round" paint-order="stroke" >右</text>
<text x="460.4" y="78.9" font-size="12" text-anchor="middle" fill="#555" font-weight="normal" stroke="#fff" stroke-width="2.4" stroke-linejoin="round" paint-order="stroke" >街</text>
<text x="516.6" y="142.8" font-size="14" text-anchor="middle" fill="#3f7ecb" font-weight="normal" stroke="#fff" stroke-width="2.4" stroke-linejoin="round" paint-order="stroke" >南海</text>
<rect x="475.4" y="161.6" width="39.5" height="11.6" rx="5.8" fill="#d2474f"/>
<text x="495.3" y="171.89999999999998" font-size="10" text-anchor="middle" fill="#f3d9da">1号线</text>
<g transform="translate(596.4 163.4)"><rect x="-8.5" y="-8.5" width="17" height="17" rx="2.6" fill="#3f6bdc" stroke="#fff" stroke-width="0.8"/><circle r="5.2" fill="none" stroke="#fff" stroke-width="1.6"/><path d="M2.8 -2.2 A3 3 0 1 0 2.8 2.2 M0.4 0 H3" fill="none" stroke="#fff" stroke-width="1.4"/></g>
<text x="597.3" y="184.8" font-size="12" text-anchor="middle" fill="#3c3c3c" font-weight="normal" stroke="#fff" stroke-width="2.4" stroke-linejoin="round" paint-order="stroke" >天安门西</text>
<text x="571.1" y="214.5" font-size="15" text-anchor="middle" fill="#58a86c" font-weight="normal" stroke="#fff" stroke-width="2.4" stroke-linejoin="round" paint-order="stroke" >国家大剧院</text>
<g transform="translate(478.4 229.3)"><path d="M-4.2 7.2 L0 12.6 L4.2 7.2 Z" fill="#41b9d0"/><circle r="8.8" fill="#41b9d0" stroke="#fff" stroke-width="0.8"/><path d="M-3.4 4.6 V-3.2 L1 -5 V4.6 Z M1.8 4.6 V-1.6 H4 V4.6 Z" fill="#fff"/><path d="M-2 -1.8 h1.6 M-2 0.4 h1.6 M-2 2.6 h1.6" stroke="#41b9d0" stroke-width="0.9"/></g>
<text x="479.9" y="251.6" font-size="12" text-anchor="middle" fill="#3c3c3c" font-weight="normal" stroke="#fff" stroke-width="2.4" stroke-linejoin="round" paint-order="stroke" >北京昌盛</text>
<text x="637.9" y="209.5" font-size="12" text-anchor="start" fill="#3c3c3c" font-weight="normal" stroke="#fff" stroke-width="2.4" stroke-linejoin="round" paint-order="stroke" >中国国家博物馆</text>
<g transform="translate(734.8 203.7)"><path d="M-4.2 7.2 L0 12.6 L4.2 7.2 Z" fill="#41b9d0"/><circle r="8.8" fill="#41b9d0" stroke="#fff" stroke-width="0.8"/><path d="M-5 -2 L0 -5 L5 -2 Z" fill="#fff"/><path d="M-3.4 -1 V3 M-1.1 -1 V3 M1.1 -1 V3 M3.4 -1 V3" stroke="#fff" stroke-width="1.3"/><path d="M-5 4.2 H5" stroke="#fff" stroke-width="1.4"/></g>
<text x="638.8" y="242.6" font-size="12" text-anchor="middle" fill="#3f9c4c" font-weight="normal" stroke="#fff" stroke-width="2.4" stroke-linejoin="round" paint-order="stroke" >天安门广场</text>
<g transform="translate(681.5 236.2)"><path d="M-4.2 7.2 L0 12.6 L4.2 7.2 Z" fill="#4fc25c"/><circle r="8.8" fill="#4fc25c" stroke="#fff" stroke-width="0.8"/><path d="M-2.2 -5 L0.6 1.6 H-5 Z" fill="#fff"/><path d="M2.6 -2.6 L5 2.4 H0.4 Z" fill="#fff"/><path d="M-2.2 1 V4.6 M2.6 2 V4.6" stroke="#fff" stroke-width="1.2"/></g>
<g transform="translate(611.7 24.7)"><path d="M-4.2 7.2 L0 12.6 L4.2 7.2 Z" fill="#c99a5e"/><circle r="8.8" fill="#c99a5e" stroke="#fff" stroke-width="0.8"/><path d="M-5.2 -1.4 L-3 -4.4 H3 L5.2 -1.4 Z" fill="#fff"/><path d="M-4.2 -0.6 H4.2 V4.4 H1.4 V1.6 H-1.4 V4.4 H-4.2 Z" fill="#fff"/></g>
<text x="612.3" y="47.3" font-size="12" text-anchor="middle" fill="#6b5a3c" font-weight="normal" stroke="#fff" stroke-width="2.4" stroke-linejoin="round" paint-order="stroke" >西华门</text>
<text x="672.5" y="7.3" font-size="12" text-anchor="middle" fill="#6b5a3c" font-weight="normal" stroke="#fff" stroke-width="2.4" stroke-linejoin="round" paint-order="stroke" >故宫博物院</text>
<text x="661.3" y="100.6" font-size="12" text-anchor="middle" fill="#6b5a3c" font-weight="normal" stroke="#fff" stroke-width="2.4" stroke-linejoin="round" paint-order="stroke" >鹿形柏</text>
<g transform="translate(691.1 93.9)"><path d="M-4.2 7.2 L0 12.6 L4.2 7.2 Z" fill="#c99a5e"/><circle r="8.8" fill="#c99a5e" stroke="#fff" stroke-width="0.8"/><path d="M-5 -2 L0 -5 L5 -2 Z" fill="#fff"/><path d="M-3.4 -1 V3 M-1.1 -1 V3 M1.1 -1 V3 M3.4 -1 V3" stroke="#fff" stroke-width="1.3"/><path d="M-5 4.2 H5" stroke="#fff" stroke-width="1.4"/></g>
<text x="705.6" y="52.4" font-size="12" text-anchor="middle" fill="#444" font-weight="normal" stroke="#fff" stroke-width="2.4" stroke-linejoin="round" paint-order="stroke" >午门</text>
<g transform="translate(776.9 52.7)"><path d="M-4.2 7.2 L0 12.6 L4.2 7.2 Z" fill="#4fc25c"/><circle r="8.8" fill="#4fc25c" stroke="#fff" stroke-width="0.8"/><path d="M-2.2 -5 L0.6 1.6 H-5 Z" fill="#fff"/><path d="M2.6 -2.6 L5 2.4 H0.4 Z" fill="#fff"/><path d="M-2.2 1 V4.6 M2.6 2 V4.6" stroke="#fff" stroke-width="1.2"/></g>
<text x="777.8" y="75.9" font-size="12" text-anchor="middle" fill="#3f9c4c" font-weight="normal" stroke="#fff" stroke-width="2.4" stroke-linejoin="round" paint-order="stroke" >普度寺</text>
<g transform="translate(761.8 143.8)"><path d="M-4.2 7.2 L0 12.6 L4.2 7.2 Z" fill="#4fc25c"/><circle r="8.8" fill="#4fc25c" stroke="#fff" stroke-width="0.8"/><ellipse cx="-1.8" cy="-1.2" rx="2.2" ry="3.6" fill="#fff"/><ellipse cx="2.6" cy="0.2" rx="1.7" ry="2.6" fill="#fff"/><path d="M-1.8 1 V4.8 M2.6 1.6 V4.8 M-4.6 4.8 H4.8" stroke="#fff" stroke-width="1"/></g>
<text x="773.3" y="150.2" font-size="12" text-anchor="start" fill="#3f9c4c" font-weight="normal" stroke="#fff" stroke-width="2.4" stroke-linejoin="round" paint-order="stroke" >菖蒲河公园</text>
<text x="869.6" y="56.1" font-size="12" text-anchor="end" fill="#3c3c3c" font-weight="normal" stroke="#fff" stroke-width="2.4" stroke-linejoin="round" paint-order="stroke" >东安市场</text>
<g transform="translate(883.1 49.6)"><path d="M-4.2 7.2 L0 12.6 L4.2 7.2 Z" fill="#a877df"/><circle r="8.8" fill="#a877df" stroke="#fff" stroke-width="0.8"/><path d="M-4.4 4.2 L-3.6 -1.6 H3.6 L4.4 4.2 Z" fill="#fff"/><path d="M-2 -1.4 V-2.6 A2 2 0 0 1 2 -2.6 V-1.4" fill="none" stroke="#fff" stroke-width="1.1"/></g>
<text x="905.7" y="103.0" font-size="12" text-anchor="end" fill="#3c3c3c" font-weight="normal" stroke="#fff" stroke-width="2.4" stroke-linejoin="round" paint-order="stroke" >北京协和医学院</text>
<g transform="translate(918.6 96.9)"><path d="M-4.2 7.2 L0 12.6 L4.2 7.2 Z" fill="#41b9d0"/><circle r="8.8" fill="#41b9d0" stroke="#fff" stroke-width="0.8"/><path d="M-5.6 -1.2 L0 -4 L5.6 -1.2 L0 1.6 Z" fill="#fff"/><path d="M-3.2 1 V3.2 Q0 5.4 3.2 3.2 V1" fill="none" stroke="#fff" stroke-width="1.3"/></g>
<text x="867.2" y="126.8" font-size="12" text-anchor="end" fill="#3c3c3c" font-weight="normal" stroke="#fff" stroke-width="2.4" stroke-linejoin="round" paint-order="stroke" >东方新天地</text>
<g transform="translate(881.0 121.0)"><path d="M-4.2 7.2 L0 12.6 L4.2 7.2 Z" fill="#a877df"/><circle r="8.8" fill="#a877df" stroke="#fff" stroke-width="0.8"/><path d="M-4.4 4.2 L-3.6 -1.6 H3.6 L4.4 4.2 Z" fill="#fff"/><path d="M-2 -1.4 V-2.6 A2 2 0 0 1 2 -2.6 V-1.4" fill="none" stroke="#fff" stroke-width="1.1"/></g>
<clipPath id="wfj"><rect x="0" y="0" width="876" height="284"/></clipPath><g clip-path="url(#wfj)">
<g transform="translate(874.1 151.0)"><rect x="-8.5" y="-8.5" width="17" height="17" rx="2.6" fill="#3f6bdc" stroke="#fff" stroke-width="0.8"/><circle r="5.2" fill="none" stroke="#fff" stroke-width="1.6"/><path d="M2.8 -2.2 A3 3 0 1 0 2.8 2.2 M0.4 0 H3" fill="none" stroke="#fff" stroke-width="1.4"/></g>
<text x="857.5" y="173.4" font-size="12" text-anchor="start" fill="#3c3c3c" font-weight="normal" stroke="#fff" stroke-width="2.4" stroke-linejoin="round" paint-order="stroke" >王府井</text>
</g>
<text x="961.9" y="10.9" font-size="12" text-anchor="middle" fill="#3c3c3c" font-weight="normal" stroke="#fff" stroke-width="2.4" stroke-linejoin="round" paint-order="stroke" >灯市口</text>
<text x="964.3" y="35.0" font-size="12" text-anchor="end" fill="#3c3c3c" font-weight="normal" stroke="#fff" stroke-width="2.4" stroke-linejoin="round" paint-order="stroke" >励骏酒店</text>
<g transform="translate(977.9 29.5)"><path d="M-4.2 7.2 L0 12.6 L4.2 7.2 Z" fill="#7b74ea"/><circle r="8.8" fill="#7b74ea" stroke="#fff" stroke-width="0.8"/><path d="M-4.6 4 V-3.6 M-4.6 2 H4.6 V4" fill="none" stroke="#fff" stroke-width="1.5"/><rect x="-2.6" y="-2.2" width="7" height="3.2" rx="1" fill="#fff"/></g>
<text x="955.3" y="98.2" font-size="12" text-anchor="start" fill="#3c3c3c" font-weight="normal" stroke="#fff" stroke-width="2.4" stroke-linejoin="round" paint-order="stroke" >明阳国际中心</text>
<g transform="translate(1039.6 91.8)"><path d="M-4.2 7.2 L0 12.6 L4.2 7.2 Z" fill="#41b9d0"/><circle r="8.8" fill="#41b9d0" stroke="#fff" stroke-width="0.8"/><path d="M-3.4 4.6 V-3.2 L1 -5 V4.6 Z M1.8 4.6 V-1.6 H4 V4.6 Z" fill="#fff"/><path d="M-2 -1.8 h1.6 M-2 0.4 h1.6 M-2 2.6 h1.6" stroke="#41b9d0" stroke-width="0.9"/></g>
<g transform="translate(933.6 131.5)"><path d="M-4.2 7.2 L0 12.6 L4.2 7.2 Z" fill="#41b9d0"/><circle r="8.8" fill="#41b9d0" stroke="#fff" stroke-width="0.8"/><path d="M-3.4 4.6 V-3.2 L1 -5 V4.6 Z M1.8 4.6 V-1.6 H4 V4.6 Z" fill="#fff"/><path d="M-2 -1.8 h1.6 M-2 0.4 h1.6 M-2 2.6 h1.6" stroke="#41b9d0" stroke-width="0.9"/></g>
<text x="945.4" y="132.2" font-size="12" text-anchor="start" fill="#3c3c3c" font-weight="normal" stroke="#fff" stroke-width="2.4" stroke-linejoin="round" paint-order="stroke" >东方广场-东</text>
<text x="945.4" y="144.8" font-size="12" text-anchor="start" fill="#3c3c3c" font-weight="normal" stroke="#fff" stroke-width="2.4" stroke-linejoin="round" paint-order="stroke" >办公楼E1座</text>
<g transform="translate(989.9 168.5)"><path d="M-4.2 7.2 L0 12.6 L4.2 7.2 Z" fill="#41b9d0"/><circle r="8.8" fill="#41b9d0" stroke="#fff" stroke-width="0.8"/><path d="M-3.4 4.6 V-3.2 L1 -5 V4.6 Z M1.8 4.6 V-1.6 H4 V4.6 Z" fill="#fff"/><path d="M-2 -1.8 h1.6 M-2 0.4 h1.6 M-2 2.6 h1.6" stroke="#41b9d0" stroke-width="0.9"/></g>
<text x="955.9" y="192.4" font-size="12" text-anchor="start" fill="#3c3c3c" font-weight="normal" stroke="#fff" stroke-width="2.4" stroke-linejoin="round" paint-order="stroke" >民生金融中心</text>
<text x="850.0" y="229.4" font-size="12" text-anchor="end" fill="#3f9c4c" font-weight="normal" stroke="#fff" stroke-width="2.4" stroke-linejoin="round" paint-order="stroke" >法国使馆旧址</text>
<g transform="translate(864.1 224.2)"><path d="M-4.2 7.2 L0 12.6 L4.2 7.2 Z" fill="#4fc25c"/><circle r="8.8" fill="#4fc25c" stroke="#fff" stroke-width="0.8"/><path d="M-5.2 -1.4 L-3 -4.4 H3 L5.2 -1.4 Z" fill="#fff"/><path d="M-4.2 -0.6 H4.2 V4.4 H1.4 V1.6 H-1.4 V4.4 H-4.2 Z" fill="#fff"/></g>
<g transform="translate(980.9 242.2)"><path d="M-4.2 7.2 L0 12.6 L4.2 7.2 Z" fill="#e0525f"/><circle r="8.8" fill="#e0525f" stroke="#fff" stroke-width="0.8"/><path d="M-5 0 H5 M0 -5 V5" stroke="#fff" stroke-width="2.4"/></g>
<text x="942.4" y="265.2" font-size="12" text-anchor="start" fill="#3c3c3c" font-weight="normal" stroke="#fff" stroke-width="2.4" stroke-linejoin="round" paint-order="stroke" >同仁医院(东区)</text>
<g transform="translate(842.5 263.9)"><path d="M-4.2 7.2 L0 12.6 L4.2 7.2 Z" fill="#7b74ea"/><circle r="8.8" fill="#7b74ea" stroke="#fff" stroke-width="0.8"/><path d="M-4.6 4 V-3.6 M-4.6 2 H4.6 V4" fill="none" stroke="#fff" stroke-width="1.5"/><rect x="-2.6" y="-2.2" width="7" height="3.2" rx="1" fill="#fff"/></g>
<text x="842.5" y="287.7" font-size="12" text-anchor="middle" fill="#3c3c3c" font-weight="normal" stroke="#fff" stroke-width="2.4" stroke-linejoin="round" paint-order="stroke" >首都宾馆</text>
<g transform="translate(1071.2 15.6)"><path d="M-4.2 7.2 L0 12.6 L4.2 7.2 Z" fill="#41b9d0"/><circle r="8.8" fill="#41b9d0" stroke="#fff" stroke-width="0.8"/><path d="M-3.4 4.6 V-3.2 L1 -5 V4.6 Z M1.8 4.6 V-1.6 H4 V4.6 Z" fill="#fff"/><path d="M-2 -1.8 h1.6 M-2 0.4 h1.6 M-2 2.6 h1.6" stroke="#41b9d0" stroke-width="0.9"/></g>
<text x="1071.2" y="38.3" font-size="12" text-anchor="middle" fill="#3c3c3c" font-weight="normal" stroke="#fff" stroke-width="2.4" stroke-linejoin="round" paint-order="stroke" >鑫海大厦</text>
<text x="1140.4" y="6.1" font-size="12" text-anchor="middle" fill="#3f9c4c" font-weight="normal" stroke="#fff" stroke-width="2.4" stroke-linejoin="round" paint-order="stroke" >禄米仓</text>
<g transform="translate(1244.2 30.1)"><path d="M-4.2 7.2 L0 12.6 L4.2 7.2 Z" fill="#41b9d0"/><circle r="8.8" fill="#41b9d0" stroke="#fff" stroke-width="0.8"/><path d="M-3.4 4.6 V-3.2 L1 -5 V4.6 Z M1.8 4.6 V-1.6 H4 V4.6 Z" fill="#fff"/><path d="M-2 -1.8 h1.6 M-2 0.4 h1.6 M-2 2.6 h1.6" stroke="#41b9d0" stroke-width="0.9"/></g>
<text x="1245.1" y="53.0" font-size="12" text-anchor="middle" fill="#3c3c3c" font-weight="normal" stroke="#fff" stroke-width="2.4" stroke-linejoin="round" paint-order="stroke" >天雅大厦</text>
<g transform="translate(1188.5 71.3)"><path d="M-4.2 7.2 L0 12.6 L4.2 7.2 Z" fill="#41b9d0"/><circle r="8.8" fill="#41b9d0" stroke="#fff" stroke-width="0.8"/><path d="M-3.4 4.6 V-3.2 L1 -5 V4.6 Z M1.8 4.6 V-1.6 H4 V4.6 Z" fill="#fff"/><path d="M-2 -1.8 h1.6 M-2 0.4 h1.6 M-2 2.6 h1.6" stroke="#41b9d0" stroke-width="0.9"/></g>
<text x="1199.9" y="76.5" font-size="12" text-anchor="start" fill="#3c3c3c" font-weight="normal" stroke="#fff" stroke-width="2.4" stroke-linejoin="round" paint-order="stroke" >华润大厦</text>
<g transform="translate(1183.4 93.3)"><circle r="8.6" fill="#e8b84a" stroke="#c98c2a" stroke-width="1"/><circle r="5.8" fill="#d93a34"/><path d="M-3 1.6 H3 M0 -3.4 V1.6 M-2.2 -1.4 H2.2" stroke="#f6d878" stroke-width="1.2"/></g>
<text x="1184.0" y="115.0" font-size="12" text-anchor="middle" fill="#3c3c3c" font-weight="normal" stroke="#fff" stroke-width="2.4" stroke-linejoin="round" paint-order="stroke" >北京市人</text>
<text x="1184.0" y="127.1" font-size="12" text-anchor="middle" fill="#3c3c3c" font-weight="normal" stroke="#fff" stroke-width="2.4" stroke-linejoin="round" paint-order="stroke" >民检察院</text>
<g transform="translate(1305.2 78.8)"><path d="M-4.2 7.2 L0 12.6 L4.2 7.2 Z" fill="#e0525f"/><circle r="8.8" fill="#e0525f" stroke="#fff" stroke-width="0.8"/><path d="M0 -5.4 L1.5 -1.7 L5.4 -1.5 L2.4 1 L3.4 4.8 L0 2.7 L-3.4 4.8 L-2.4 1 L-5.4 -1.5 L-1.5 -1.7 Z" fill="#fff"/></g>
<text x="1317.3" y="84.0" font-size="12" text-anchor="start" fill="#3c3c3c" font-weight="normal" stroke="#fff" stroke-width="2.4" stroke-linejoin="round" paint-order="stroke" >波兰大使馆</text>
<g transform="translate(1275.2 108.3)"><path d="M-4.2 7.2 L0 12.6 L4.2 7.2 Z" fill="#7b74ea"/><circle r="8.8" fill="#7b74ea" stroke="#fff" stroke-width="0.8"/><path d="M-4.6 4 V-3.6 M-4.6 2 H4.6 V4" fill="none" stroke="#fff" stroke-width="1.5"/><rect x="-2.6" y="-2.2" width="7" height="3.2" rx="1" fill="#fff"/></g>
<text x="1275.2" y="131.6" font-size="12" text-anchor="middle" fill="#3c3c3c" font-weight="normal" stroke="#fff" stroke-width="2.4" stroke-linejoin="round" paint-order="stroke" >北京瑞吉酒店</text>
<text x="1095.8" y="133.7" font-size="12" text-anchor="end" fill="#3c3c3c" font-weight="normal" stroke="#fff" stroke-width="2.4" stroke-linejoin="round" paint-order="stroke" >北京国际饭店</text>
<g transform="translate(1109.7 127.0)"><path d="M-4.2 7.2 L0 12.6 L4.2 7.2 Z" fill="#7b74ea"/><circle r="8.8" fill="#7b74ea" stroke="#fff" stroke-width="0.8"/><path d="M-4.6 4 V-3.6 M-4.6 2 H4.6 V4" fill="none" stroke="#fff" stroke-width="1.5"/><rect x="-2.6" y="-2.2" width="7" height="3.2" rx="1" fill="#fff"/></g>
<text x="1096.7" y="156.0" font-size="14" text-anchor="middle" fill="#2d2d2d" font-weight="normal" stroke="#fff" stroke-width="2.4" stroke-linejoin="round" paint-order="stroke" >建国门内大街</text>
<text x="1212.6" y="155.3" font-size="12" text-anchor="middle" fill="#3c3c3c" font-weight="normal" stroke="#fff" stroke-width="2.4" stroke-linejoin="round" paint-order="stroke" >建国门桥</text>
<g transform="translate(1130.7 172.4)"><path d="M-4.2 7.2 L0 12.6 L4.2 7.2 Z" fill="#41b9d0"/><circle r="8.8" fill="#41b9d0" stroke="#fff" stroke-width="0.8"/><path d="M-3.4 4.6 V-3.2 L1 -5 V4.6 Z M1.8 4.6 V-1.6 H4 V4.6 Z" fill="#fff"/><path d="M-2 -1.8 h1.6 M-2 0.4 h1.6 M-2 2.6 h1.6" stroke="#41b9d0" stroke-width="0.9"/></g>
<text x="1141.9" y="177.9" font-size="12" text-anchor="start" fill="#3c3c3c" font-weight="normal" stroke="#fff" stroke-width="2.4" stroke-linejoin="round" paint-order="stroke" >中粮广场</text>
<text x="1295.3" y="172.2" font-size="12" text-anchor="start" fill="#3c3c3c" font-weight="normal" stroke="#fff" stroke-width="2.4" stroke-linejoin="round" paint-order="stroke" >汇京双子座大厦</text>
<g transform="translate(1116.9 204.6)"><path d="M-4.2 7.2 L0 12.6 L4.2 7.2 Z" fill="#5b8fe8"/><circle r="8.8" fill="#5b8fe8" stroke="#fff" stroke-width="0.8"/><text x="0" y="4.6" font-size="13" font-weight="bold" text-anchor="middle" fill="#fff">P</text></g>
<g transform="translate(1153.9 227.8)"><path d="M-4.2 7.2 L0 12.6 L4.2 7.2 Z" fill="#41b9d0"/><circle r="8.8" fill="#41b9d0" stroke="#fff" stroke-width="0.8"/><path d="M-3.4 4.6 V-3.2 L1 -5 V4.6 Z M1.8 4.6 V-1.6 H4 V4.6 Z" fill="#fff"/><path d="M-2 -1.8 h1.6 M-2 0.4 h1.6 M-2 2.6 h1.6" stroke="#41b9d0" stroke-width="0.9"/></g>
<text x="1165.0" y="233.6" font-size="12" text-anchor="start" fill="#3c3c3c" font-weight="normal" stroke="#fff" stroke-width="2.4" stroke-linejoin="round" paint-order="stroke" >信通大厦</text>
<g transform="translate(1090.7 240.7)"><path d="M-4.2 7.2 L0 12.6 L4.2 7.2 Z" fill="#4a7fe6"/><circle r="8.8" fill="#4a7fe6" stroke="#fff" stroke-width="0.8"/><circle r="4.6" fill="none" stroke="#fff" stroke-width="1.4"/><path d="M-2.4 4.6 L-1 1.4 H1 L2.4 4.6 M-1.6 -1.2 A1.6 1.6 0 0 1 1.6 -1.2 V1.4 H-1.6 Z" fill="none" stroke="#fff" stroke-width="1.1"/></g>
<text x="1101.8" y="245.9" font-size="12" text-anchor="start" fill="#3f7ecb" font-weight="normal" stroke="#fff" stroke-width="2.4" stroke-linejoin="round" paint-order="stroke" >北京站</text>
<text x="1325.4" y="31.9" font-size="15" text-anchor="middle" fill="#6fb283" font-weight="normal" stroke="#fff" stroke-width="2.4" stroke-linejoin="round" paint-order="stroke" >日坛公园</text>
<g transform="translate(970.4 286.8)"><circle r="9.4" fill="#3c80e6" stroke="#fff" stroke-width="0.8"/><circle r="6.6" fill="#fff"/><path d="M-4.4 1.2 A4.6 4.6 0 0 1 3 -3.4 M4.4 -1.2 A4.6 4.6 0 0 1 -3 3.4" fill="none" stroke="#3c80e6" stroke-width="2.2"/><path d="M1.4 -5.6 L5 -3.4 L1.6 -1 Z M-1.4 5.6 L-5 3.4 L-1.6 1 Z" fill="#3c80e6"/></g>
<g transform="translate(662 41)"><path d="M4.859999999999999 1.075 H22.139999999999997 L25.110000000000003 6.45 H1.8900000000000001 Z" fill="#e7b43c"/><rect x="3.7800000000000002" y="6.45" width="19.439999999999998" height="3.0100000000000002" fill="#c9432f"/><path d="M1.08 9.46 H25.919999999999998 L27 12.9 H0 Z" fill="#efc24a"/><rect x="0.8099999999999999" y="12.9" width="25.38" height="8.6" fill="#d5452f"/><rect x="4.859999999999999" y="15.91" width="2.7" height="5.59" fill="#8f2416"/><rect x="12.15" y="15.479999999999999" width="2.7" height="6.0200000000000005" fill="#8f2416"/><rect x="19.439999999999998" y="15.91" width="2.7" height="5.59" fill="#8f2416"/></g>
<g transform="translate(658 131)"><path d="M10 1 H31 L34 6.4 H7 Z" fill="#e9b83f"/><rect x="10" y="6.4" width="21" height="2.6" fill="#3f78b8"/><path d="M6 9 H35 L37 11.6 H4 Z" fill="#efc049"/><path d="M1.6 11.2 H39.4 L40.6 17.6 H0.4 Z" fill="#dd4f2b"/><path d="M0.4 15.8 H40.6 V17.8 H0.4 Z" fill="#c9401f"/><rect x="9" y="13.6" width="2.2" height="4" fill="#7f2414"/><rect x="14.4" y="13.6" width="2.2" height="4" fill="#7f2414"/><rect x="19.4" y="13" width="2.6" height="4.6" fill="#7f2414"/><rect x="24.6" y="13.6" width="2.2" height="4" fill="#7f2414"/><rect x="30" y="13.6" width="2.2" height="4" fill="#7f2414"/></g>
<g transform="translate(678.6 128)"><path d="M-8.2 3.6 Q-5 9 0 14.6 Q5 9 8.2 3.6 Z" fill="#e3262c"/><circle r="9" fill="#ee2a30"/><ellipse cx="-2.6" cy="-3.4" rx="3.2" ry="2.2" fill="#f76a66" opacity="0.75"/></g>
<g transform="translate(4 238)"><text x="0" y="20.5" font-size="15.5" font-weight="bold" fill="#e1251b" stroke="#fff" stroke-width="2.6" stroke-linejoin="round" paint-order="stroke" letter-spacing="-0.6">Bai</text><g stroke="#fff" stroke-width="1.2" fill="#2a33d4" transform="translate(-1.8 0)"><ellipse cx="28.4" cy="10.4" rx="2.9" ry="3.8"/><ellipse cx="33.6" cy="4.2" rx="3" ry="3.9"/><ellipse cx="40.8" cy="4.2" rx="3" ry="3.9"/><ellipse cx="46.2" cy="10.6" rx="2.9" ry="3.8"/><path d="M37.2 9 C41.4 9 46.6 15 46.6 19.6 C46.6 23.6 43 24.4 37.2 24.4 C31.4 24.4 27.8 23.6 27.8 19.6 C27.8 15 33 9 37.2 9 Z"/></g><text x="35.4" y="22.4" font-size="10" font-weight="bold" fill="#fff" text-anchor="middle">du</text><text x="47" y="20" font-size="12.5" font-weight="bold" fill="#e1251b" stroke="#fff" stroke-width="2.4" stroke-linejoin="round" paint-order="stroke" letter-spacing="-0.8">地图</text></g>
<rect x="0" y="268" width="490" height="13" fill="#fff" opacity="0.62"/>
<text x="3" y="278.4" font-size="12" fill="#222">© 2021 Baidu - GS(2019)5218号 - 甲测资字1100930 - 京ICP证030173号 - Data © 长地万方</text>
</svg>
</div><!--/map-->
</div>
<div id="float">
<svg width="44" height="220" viewBox="0 0 44 220" style="position:absolute;left:0;top:0">
  <g fill="none" stroke="#f0f0f4" stroke-width="1.6" stroke-linecap="round" stroke-linejoin="round">
    <!-- pencil -->
    <path d="M12.2 33 L14 27.6 L26.6 15 L30.6 19 L18 31.6 Z M24.4 17.2 L28.4 21.2 M23.6 33.2 H32"/>
    <!-- headset -->
    <path d="M13.6 70 V66.6 A8.4 8.4 0 0 1 30.4 66.6 V70 M13.6 66.4 H12.4 V72.6 H13.6 Z M30.4 66.4 H31.6 V72.6 H30.4 Z M30.4 72.6 Q30 77.4 23.4 77.6"/>
    <!-- help -->
    <path d="M30.6 121.4 H22 A9.4 9.4 0 1 1 31.4 112 V121.4"/>
    <path d="M19.2 109.4 A2.9 2.9 0 1 1 23.6 112 Q22 113 22 114.8 M22 117.6 V117.8"/>
    <!-- users -->
    <circle cx="24" cy="154" r="5"/><path d="M15.2 165.8 A8.8 8.8 0 0 1 32.8 165.8"/>
    <path d="M17.6 147.4 A4 4 0 1 0 17.2 155.2 M12 161.4 A6 6 0 0 1 16.6 156"/>
    <!-- user plus -->
    <circle cx="21.6" cy="196.4" r="5.4"/><path d="M12.4 209.6 A9.4 9.4 0 0 1 28 202.4 M25.6 207.4 H31.6 M28.6 204.4 V210.4"/>
  </g>
</svg>
</div>
<div id="sb"><div class="th"></div>
<svg width="17" height="944" viewBox="0 0 17 944" style="position:absolute;left:0;top:0"><path d="M4.8 11 L8.5 7 L12.2 11 Z" fill="#a3a3a3"/><path d="M4.8 933 L8.5 937.2 L12.2 933 Z" fill="#505050"/></svg>
</div>
</body>
</html>
